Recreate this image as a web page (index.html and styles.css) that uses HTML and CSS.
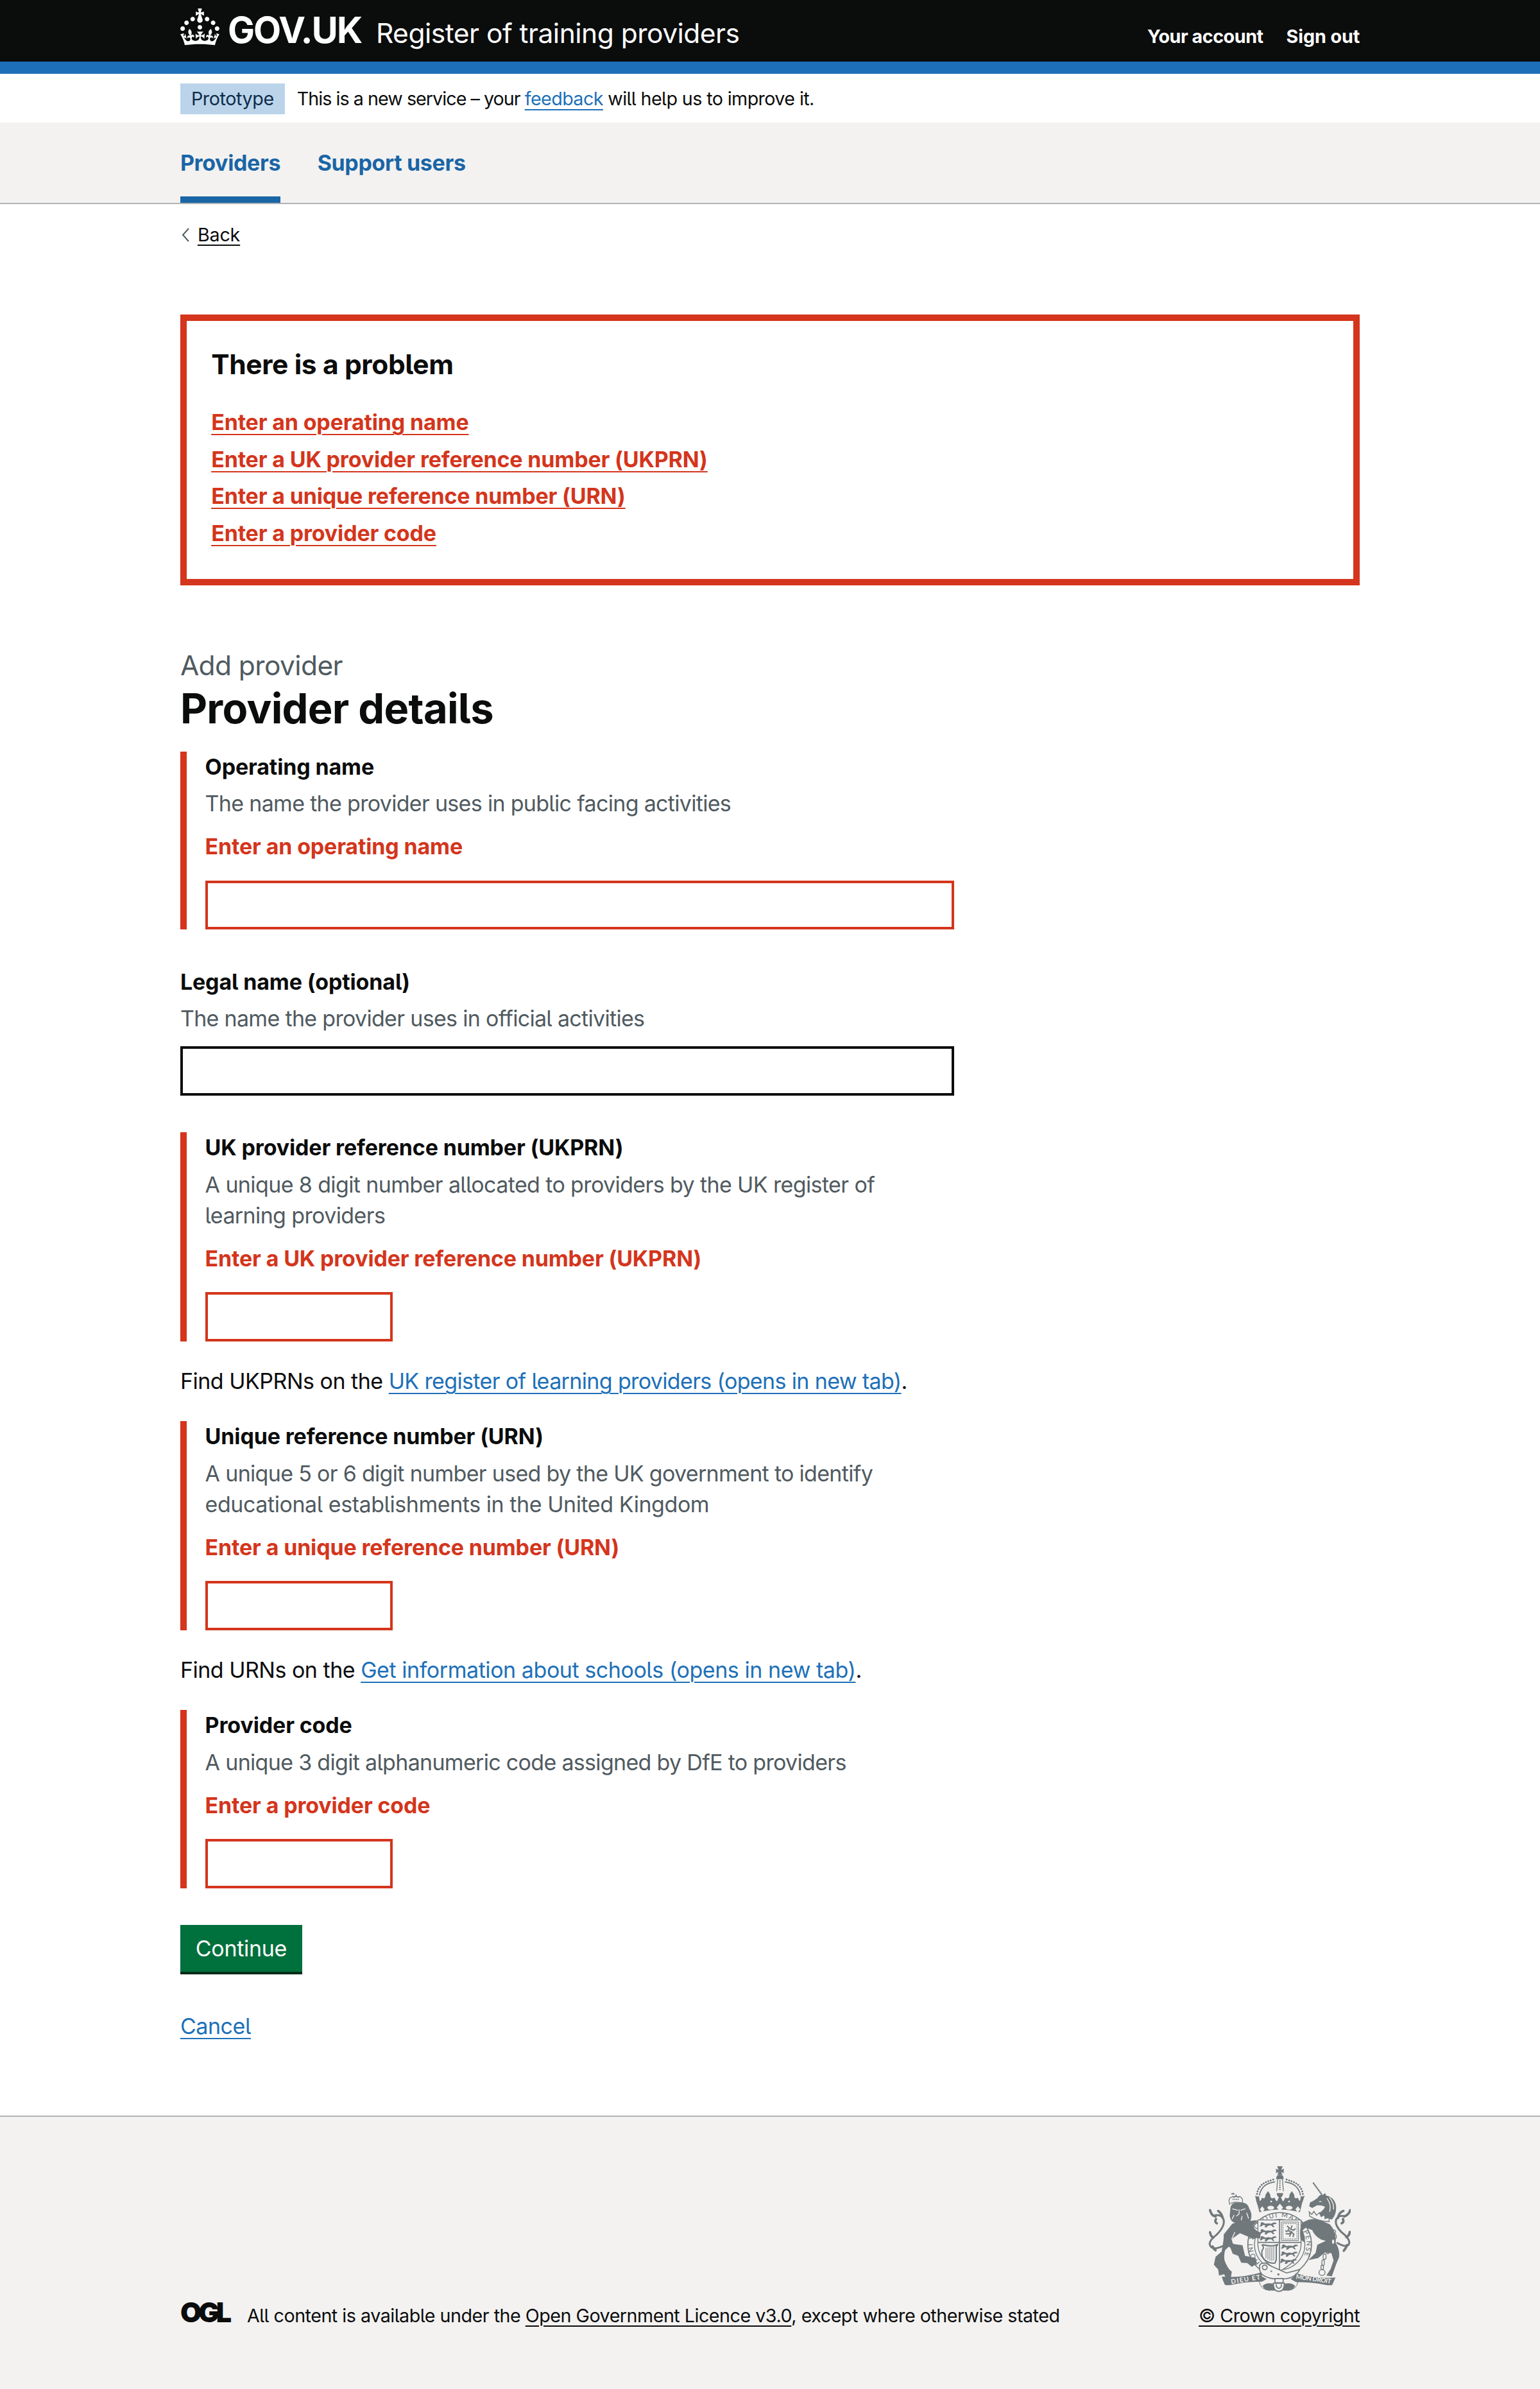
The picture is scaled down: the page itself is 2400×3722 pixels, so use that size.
FILE: index.html
```
<!DOCTYPE html>
<html lang="en">
<head>
  <meta charset="utf-8">
  <title>Error: Provider details - Register of training providers</title>
  <link rel="stylesheet" href="styles.css">
</head>
<body>
  <header class="header">
    <div class="container header-inner">
      <a class="brand" href="#">
        <svg class="crown" viewBox="0 0 32 30" fill="currentColor" aria-hidden="true"><path d="M22.6 10.4c-1 .4-2-.1-2.4-1-.4-.9.1-2 1-2.4.9-.4 2 .1 2.4 1s-.1 2-1 2.4m-5.9 6.7c-.9.4-2-.1-2.4-1-.4-.9.1-2 1-2.4.9-.4 2 .1 2.4 1s-.1 2-1 2.4m10.8-3.7c-1 .4-2-.1-2.4-1-.4-.9.1-2 1-2.4.9-.4 2 .1 2.4 1s0 2-1 2.4m3.3 4.8c-1 .4-2-.1-2.4-1-.4-.9.1-2 1-2.4.9-.4 2 .1 2.4 1s-.1 2-1 2.4M17 4.7l2.3 1.2V2.5l-2.3.7-.2-.2.9-3h-3.4l.9 3-.2.2c-.1.1-2.3-.7-2.3-.7v3.4L15 4.7c.1.1.1.2.2.2l-1.3 4c-.1.2-.1.4-.1.6 0 1.1.8 2 1.9 2.2h.7c1-.2 1.9-1.1 1.9-2.1 0-.2 0-.4-.1-.6l-1.3-4c-.1-.2 0-.2.1-.3m-7.6 5.7c.9.4 2-.1 2.4-1 .4-.9-.1-2-1-2.4-.9-.4-2 .1-2.4 1s0 2 1 2.4m-5 3c.9.4 2-.1 2.4-1 .4-.9-.1-2-1-2.4-.9-.4-2 .1-2.4 1s.1 2 1 2.4m-3.2 4.8c.9.4 2-.1 2.4-1 .4-.9-.1-2-1-2.4-.9-.4-2 .1-2.4 1s0 2 1 2.4m14.8 11c4.4 0 8.6.3 12.3.8 1.1-4.5 2.4-7 3.7-8.8l-2.5-.9c.2 1.3.3 1.9 0 2.7-.4-.4-.8-1.1-1.1-2.3l-1.2 4c.7-.5 1.3-.8 2-.9-1.1 2.5-2.6 3.1-3.5 3-1.1-.2-1.7-1.2-1.5-2.1.3-1.2 1.5-1.5 2.1-.1 1.1-2.3-.8-3-2-2.3 1.9-1.9 2.1-3.5.6-5.6-2.1 1.6-2.1 3.2-1.2 5.5-1.2-1.4-3.2-.6-2.5 1.6.9-1.4 2.1-.5 1.9.8-.2 1.1-1.7 2.1-3.5 1.9-2.7-.2-2.9-2.1-2.9-3.6.7-.1 1.9.5 2.9 1.9l.4-4.3c-1.1 1.1-2.1 1.4-3.2 1.4.4-1.2 2.1-3 2.1-3h-5.4s1.7 1.9 2.1 3c-1.1 0-2.1-.2-3.2-1.4l.4 4.3c1-1.4 2.2-2 2.9-1.9-.1 1.5-.2 3.4-2.9 3.6-1.9.2-3.4-.8-3.5-1.9-.2-1.3 1-2.2 1.9-.8.7-2.3-1.2-3-2.5-1.6.9-2.2.9-3.9-1.2-5.5-1.5 2-1.3 3.7.6 5.6-1.2-.7-3.1 0-2 2.3.6-1.4 1.8-1.1 2.1.1.2.9-.3 1.9-1.5 2.1-.9.2-2.4-.5-3.5-3 .6 0 1.2.3 2 .9l-1.2-4c-.3 1.1-.7 1.9-1.1 2.3-.3-.8-.2-1.4 0-2.7l-2.9.9C1.3 23 2.6 25.5 3.7 30c3.7-.5 7.9-.8 12.3-.8"/></svg>
        <span class="brand-name">GOV.UK</span>
        <span class="brand-service">Register of training providers</span>
      </a>
      <nav class="account">
        <a class="account-link" href="#">Your account</a>
        <a class="account-link account-link--out" href="#">Sign out</a>
      </nav>
    </div>
  </header>

  <div class="container phase">
    <strong class="tag">Prototype</strong>
    <span><span class="phase-lead">This is a new service – your </span><a class="link" href="#">feedback</a> will help us to improve it.</span>
  </div>

  <nav class="nav">
    <div class="container nav-inner">
      <a class="nav-link nav-link--current" href="#">Providers</a>
      <a class="nav-link" href="#">Support users</a>
    </div>
  </nav>

  <div class="container">
    <a class="back" href="#">
      <svg class="back-arrow" viewBox="0 0 12 22" aria-hidden="true"><path d="M11 1 2 11l9 10" fill="none" stroke="#505a5f" stroke-width="2"/></svg>
      <span class="back-text">Back</span>
    </a>

    <main class="main">
      <section class="summary">
        <h2 class="summary-title">There is a problem</h2>
        <ul class="summary-list">
          <li><a href="#operating-name">Enter an operating name</a></li>
          <li><a href="#ukprn">Enter a UK provider reference number (UKPRN)</a></li>
          <li><a href="#urn">Enter a unique reference number (URN)</a></li>
          <li><a href="#code">Enter a provider code</a></li>
        </ul>
      </section>

      <form class="form">
        <h1 class="title"><span class="caption">Add provider</span>Provider details</h1>

        <div class="group group--error">
          <label class="label" for="operating-name">Operating name</label>
          <div class="hint">The name the provider uses in public facing activities</div>
          <p class="error">Enter an operating name</p>
          <input class="input input--error" id="operating-name" type="text">
        </div>

        <div class="group">
          <label class="label" for="legal-name">Legal name (optional)</label>
          <div class="hint">The name the provider uses in official activities</div>
          <input class="input" id="legal-name" type="text">
        </div>

        <div class="group group--error group--tight">
          <label class="label" for="ukprn">UK provider reference number (UKPRN)</label>
          <div class="hint hint--loose">A unique 8 digit number allocated to providers by the UK register of<br>learning providers</div>
          <p class="error">Enter a UK provider reference number (UKPRN)</p>
          <input class="input input--error input--short" id="ukprn" type="text">
        </div>

        <p class="para">Find UKPRNs on the <a class="link link--snug" href="#">UK register of learning providers (opens in new tab)</a>.</p>

        <div class="group group--error group--tight">
          <label class="label" for="urn">Unique reference number (URN)</label>
          <div class="hint">A unique 5 or 6 digit number used by the UK government to identify<br><span class="wide">educational establishments in the United Kingdom</span></div>
          <p class="error">Enter a unique reference number (URN)</p>
          <input class="input input--error input--short" id="urn" type="text">
        </div>

        <p class="para">Find URNs on the <a class="link wide" href="#">Get information about schools (opens in new tab)</a>.</p>

        <div class="group group--error">
          <label class="label" for="code">Provider code</label>
          <div class="hint">A unique 3 digit alphanumeric code assigned by DfE to providers</div>
          <p class="error">Enter a provider code</p>
          <input class="input input--error input--short" id="code" type="text">
        </div>

        <button class="button" type="button">Continue</button>
        <p class="para para--cancel"><a class="link wide" href="#">Cancel</a></p>
      </form>
    </main>
  </div>

  <footer class="footer">
    <div class="container footer-inner">
      <div class="licence">
        <span class="ogl">OGL</span>
        <span>All content is available under the <a class="link link--dark" href="#">Open Government Licence v3.0</a>, except where otherwise stated</span>
      </div>
      <div class="copyright">
        <svg class="arms" viewBox="132 68 666 590" aria-hidden="true">
          <defs>
            <path id="garter" d="M374 522A126 126 0 1 1 560 518"/>
            <g id="passant">
              <path d="M2 8q8-9 16 0l8 3q14-4 26 0l12-6q12-2 14 6l-9 1-9 4 8 10-7 1-9-9-14 2-8 8-9-1 5-9-12-1-9 7-7-2 6-9z" fill="#70787b" stroke="none"/>
            </g>
          </defs>
          <g fill="#70787b" stroke="none">
            <!-- imperial crown -->
            <path d="M461 88 454 71h26l-7 17 12-6v21l-12-6 6 13h-24l6-13-12 6V82z"/>
            <path d="M450 132q-2-22 17-22t17 22z"/>
            <path d="M351 208q10 6 18 3l4 24q9-6 9-16l12 2q7-10 5-16 8-12 12-18 9 10 12 20-3 8 6 14l14-3q2 12 10 18l9-20q-9-5-10-20h30q-1 15-10 20l9 20q8-6 10-18l14 3q9-6 6-14 3-10 12-20 7 9 12 20-3 8 5 14l12-2q2 10 9 16l4-24q8 2 18-3l-13 38-7 30q-2 8-4 10-90-24-188 0-4-22-14-50z"/>
          </g>
          <g fill="#f3f2f1" stroke="none">
            <path d="m384 258 11 14-10 15-12-14zM467 246l15 18-15 18-15-18zM551 258l11 15-12 14-10-15z"/>
            <ellipse cx="424" cy="265" rx="16" ry="9"/><ellipse cx="510" cy="265" rx="16" ry="9"/>
            <circle cx="426" cy="236" r="4"/><circle cx="510" cy="236" r="4"/>
          </g>
          <g fill="none" stroke="#70787b" stroke-linecap="round">
            <path d="M360 200q6-52 82-68M574 200q-6-52-82-68" stroke-width="9" stroke-dasharray="0 12"/>
            <path d="M371 206q10-54 72-62M563 206q-10-54-72-62" stroke-width="5"/>
            <path d="M456 134l-4 52M479 134l4 52" stroke-width="4"/>
            <path d="M467 140v46" stroke-width="7" stroke-dasharray="0 10"/>
          </g>
          <!-- garter -->
          <g fill="none" stroke="#70787b">
            <circle cx="466" cy="437" r="149" stroke-width="5"/>
            <circle cx="466" cy="437" r="118" stroke-width="4"/>
          </g>
          <text class="garter-text" fill="#70787b"><textPath href="#garter" textLength="545">HONI SOIT QUI MAL Y PENSE</textPath></text>
          <!-- shield -->
          <path d="M364 322h202v116q-2 72-101 124-99-52-101-124z" fill="#f3f2f1" stroke="#70787b" stroke-width="4"/>
          <path d="M465 322v238M364 427h202" stroke="#70787b" stroke-width="5"/>
          <g>
            <use href="#passant" x="374" y="329"/><use href="#passant" x="374" y="362"/><use href="#passant" x="374" y="394"/>
            <use href="#passant" x="474" y="433"/><use href="#passant" x="472" y="466"/><use href="#passant" x="468" y="500"/>
          </g>
          <g fill="none" stroke="#70787b">
            <path d="M474 332h80v86h-80z" stroke-width="3"/>
            <path d="M481 339h66v72h-66z" stroke-width="3" stroke-dasharray="8 3"/>
            <path d="M500 350l12 10-8 12 18 6-14 10-14-2M524 348l-6 18 14 4 8-8M512 400l8-20 12 8-4 14M492 372l10 6" stroke-width="6"/>
            <path d="M384 440q12 10 0 24-8 28 14 46 18 16 46 14l6-16V446l8-10q-26 14-70 2z" stroke-width="6"/>
            <path d="M402 452v50M411 450v58M420 448v64M429 448v66M438 446v66" stroke-width="3"/>
          </g>
          <!-- supporters -->
          <g fill="#70787b" stroke="none">
            <path d="M236 262q4-24 42-22 38-4 46 30 14 22 8 46-2 18-16 28l-22-10-8 12-24-8q-28-8-30-36 2-22 4-40z"/>
            <path d="M244 340q28-12 64-4 22-14 54-12l-22 26q16 28 38 30l-4 30q-18-8-30 2l-30-14-34-14-34 24q-8 28 12 28l34 4q6 26 12 50l50 10 4 26-22 16-22-18-28-2-14-32-26-10-10-26-8-8-18 18q-6 28-2 48 16 42 34 52l-4 26-24 4-8-18-24 6-4-28-20-22 8-38 28-24q12-60 10-80z"/>
            <path d="M608 240q24-10 38-24 6-14 24-12l8-8 6 12q40 8 46 50 2 40-20 62l-58-14-4-14q26-18 30-32-20-8-38-6l-22 12-14-8z"/>
            <path d="M572 336q34-24 74-16l54 22q32 34 28 88 20 30 16 66l-14 34-20 56-26-4 20-30 14-40-10-34-30-4-32 26-46 10 34-34 8-38 40-18-22-6q-30-16-42-44l-30-12-14 12 10 34-4 22-16-12q-8-50 8-78z"/>
          </g>
          <g fill="none" stroke="#f3f2f1" stroke-linecap="round">
            <path d="M246 270l22 6M284 276l20-6M276 274v20l-12 10M290 306l-4 16M252 300l-8 16M312 290l8 24M256 380l-14 30 8 20" stroke-width="4"/>
            <path d="M652 236h8M688 222q20 26 12 60M700 218q20 22 18 54" stroke-width="4"/>
          </g>
          <g fill="none" stroke="#70787b" stroke-linecap="round">
            <path d="M200 444q-54 26-62-10 2-20 32-42 40-40 34-70-8-26-40-22" stroke-width="9"/>
            <path d="M140 276q6 26 26 30M178 280q16 10 22 34M168 318q-8 14 4 20M140 380q4 22 16 24M152 446q4 12 14 18" stroke-width="11"/>
            <path d="M736 430q52 30 56-4-4-22-34-44-36-34-28-62 10-22 40-16" stroke-width="9"/>
            <path d="M796 276q-6 22-28 30M764 280q-20 6-26 34M762 318q6 14-6 20M794 378q-2 18-16 24M780 440q-2 12-14 26" stroke-width="11"/>
            <path d="M624 150l38 52" stroke-width="7" stroke-dasharray="3 7"/>
            <path d="M232 250q-8-28 6-34l20-4 22 2q18 6 10 32M236 244q28-10 54 0M246 212q10 10 16-6 6 16 18 6M248 202v-6M240 200h14" stroke-width="4"/>
            <path d="M248 226h30" stroke-width="6" stroke-dasharray="0 8"/>
          </g>
          <path d="M604 284l12 12 10-14 12 18 14-12 8 18 16-8 2 18 18-6 2 20q-50 0-92-26z" fill="#f3f2f1" stroke="#70787b" stroke-width="4"/>
          <g fill="none" stroke="#70787b" stroke-width="4">
            <ellipse cx="714" cy="378" rx="14" ry="10"/><ellipse cx="724" cy="400" rx="7" ry="12"/><ellipse cx="716" cy="424" rx="7" ry="12" fill="#f3f2f1"/><ellipse cx="706" cy="446" rx="7" ry="12"/><ellipse cx="690" cy="468" rx="8" ry="12"/><ellipse cx="676" cy="494" rx="7" ry="13"/><ellipse cx="669" cy="522" rx="6" ry="14"/><circle cx="664" cy="568" r="14"/><ellipse cx="665" cy="544" rx="6" ry="11"/>
          </g>
          <!-- belt and motto -->
          <path d="M372 540q-2-18 28-16l30 16 68 30 62-16q-20 40-74 44-70 6-104-22-12-14-10-36z" fill="#f3f2f1" stroke="#70787b" stroke-width="5"/>
          <circle cx="396" cy="544" r="11" fill="none" stroke="#70787b" stroke-width="5"/>
          <circle cx="427" cy="562" r="4" fill="#70787b"/><circle cx="460" cy="577" r="5" fill="#70787b"/>
          <path d="M195 587q90 8 186-20l2 20 22 12-22 12q-80 0-150 16h-22q-10-16-16-40zM727 591q-90 8-186-20l-8 16-16 12 26 14q80 0 146 14h22q8-16 16-36z" fill="#70787b"/>
          <path d="M386 630q20-18 52-8l6 30q-50 4-58-22zM538 630q-20-18-52-8l-6 30q50 4 58-22z" fill="#70787b"/>
          <path d="M370 610q8 40 50 42M552 610q-8 40-50 42" fill="none" stroke="#70787b" stroke-width="3"/>
          <path d="M444 596h38v20h-38zM436 618h52q0 38-26 38t-26-38zM450 622v10q12 20 24 0v-10" fill="#f3f2f1" stroke="#70787b" stroke-width="5"/>
          <text class="motto" transform="translate(240 621) rotate(-9)" textLength="138">DIEU ET</text>
          <text class="motto" transform="translate(541 597) rotate(8)" textLength="166">MON DROIT</text>
        </svg>
        <a class="link link--dark" href="#">© Crown copyright</a>
      </div>
    </div>
  </footer>
</body>
</html>
```
FILE: styles.css
```
/* 1rem is ten design pixels */
html {
  font-size: 19.148px;
}

* {
  box-sizing: border-box;
}

body {
  margin: 0;
  background: #fff;
  color: #0b0c0c;
  font-family: Inter, "Noto Sans", sans-serif;
  font-size: 34px;
  font-feature-settings: "cv05";
  line-height: 2.5rem;
  white-space: nowrap;
}

h1, h2, p, ul {
  margin: 0;
  padding: 0;
}

.container {
  width: 96rem;
  margin: 0 auto;
}

.link {
  color: #1d70b8;
  text-decoration: underline 2px;
  text-underline-offset: 6px;
}

.link--dark {
  color: #0b0c0c;
  text-underline-offset: 5px;
}

.link--snug {
  letter-spacing: -0.64px;
}

.wide {
  letter-spacing: -0.44px;
}

/* Header */
.header {
  height: 115px;
  background: #0b0c0c;
  border-bottom: 19px solid #1d70b8;
}

.header-inner {
  display: flex;
  justify-content: space-between;
  align-items: baseline;
  padding-top: 13px;
}

.brand {
  display: flex;
  align-items: baseline;
  color: #fff;
  text-decoration: none;
}

.crown {
  width: 61px;
  height: 57.5px;
  margin-right: 13px;
  align-self: flex-start;
}

.brand-name {
  width: 231px;
  font-size: 56px;
  font-weight: 700;
  letter-spacing: -1.8px;
  line-height: 69px;
}

.brand-service {
  font-size: 42.5px;
  letter-spacing: -0.5px;
}

.account {
  display: flex;
  gap: 36px;
}

.account-link {
  color: #fff;
  font-size: 28.7px;
  font-weight: 700;
  letter-spacing: -0.45px;
  text-decoration: none;
}

.account-link--out {
  letter-spacing: -0.1px;
}

/* Phase banner */
.phase {
  display: flex;
  align-items: center;
  gap: 19px;
  height: 76px;
  padding-top: 1px;
  font-size: 28.7px;
  letter-spacing: -0.6px;
}

.phase-lead {
  letter-spacing: -0.97px;
}

.tag {
  height: 48px;
  padding: 0 17px 0 17px;
  background: #bbd4ea;
  color: #0c2d4a;
  font-weight: 400;
  letter-spacing: -0.4px;
  line-height: 48px;
}

/* Service navigation */
.nav {
  background: #f3f2f1;
  border-bottom: 2px solid #b1b4b6;
}

.nav-inner {
  display: flex;
  gap: 3rem;
}

.nav-link {
  height: 125px;
  padding-top: 39px;
  color: #1a65a6;
  font-weight: 700;
  letter-spacing: -0.35px;
  text-decoration: none;
}

.nav-link--current {
  border-bottom: 10px solid #1a65a6;
}

.back {
  display: flex;
  align-items: center;
  gap: 13px;
  margin-top: 1.5rem;
  padding-left: 2px;
  color: #0b0c0c;
  font-size: 28.7px;
  letter-spacing: -0.19px;
  line-height: 2rem;
  text-decoration: none;
}

.back-arrow {
  width: 12px;
  height: 22px;
}

.back-text {
  text-decoration: underline 2px;
  text-underline-offset: 5px;
}

.main {
  padding: 5.5rem 0 4rem;
}

/* Error summary */
.summary {
  margin-bottom: 5rem;
  padding: 2rem;
  border: 10px solid #d4351c;
}

.summary-title {
  margin-bottom: 2rem;
  font-size: 42.5px;
  letter-spacing: -0.38px;
  line-height: 3rem;
}

.summary-list {
  list-style: none;
}

.summary-list li {
  margin-bottom: 0.5rem;
}

.summary-list a {
  color: #d4351c;
  font-weight: 700;
  letter-spacing: -0.17px;
  text-decoration: underline 2px;
  text-underline-offset: 6px;
}

/* Form */
.form {
  width: 63rem;
}

.title {
  margin-bottom: 1.5rem;
  font-size: 65px;
  letter-spacing: -0.72px;
  line-height: 4rem;
}

.caption {
  display: block;
  color: #505a5f;
  font-size: 42.5px;
  font-weight: 400;
  letter-spacing: -0.6px;
  line-height: 3rem;
}

.group {
  margin-bottom: 3rem;
}

.group--error {
  padding-left: 1.5rem;
  border-left: 10px solid #d4351c;
}

.group--tight {
  margin-bottom: 2rem;
}

.label {
  display: block;
  margin-bottom: 0.5rem;
  font-weight: 700;
  letter-spacing: -0.15px;
}

.hint {
  margin-bottom: 1rem;
  color: #505a5f;
  letter-spacing: -0.69px;
}

.hint--loose {
  letter-spacing: -0.62px;
}

.error {
  margin-bottom: 1.5rem;
  color: #d4351c;
  font-weight: 700;
  letter-spacing: -0.17px;
}

.input {
  display: block;
  width: 100%;
  height: 4rem;
  padding: 0.5rem;
  border: 4px solid #0b0c0c;
  border-radius: 0;
  background: #fff;
  font: inherit;
}

.input--error {
  border-color: #d4351c;
}

.input--short {
  width: 292px;
}

.para {
  margin-bottom: 2rem;
  letter-spacing: -0.5px;
}

.button {
  display: block;
  width: 190px;
  height: 3.8rem;
  margin-bottom: 3.2rem;
  padding: 0;
  border: 0;
  background: #00703c;
  box-shadow: 0 4px 0 #002d18;
  color: #fff;
  font: inherit;
  letter-spacing: -0.33px;
}

/* Footer */
.footer {
  height: 427px;
  padding-top: 76px;
  background: #f3f2f1;
  border-top: 2px solid #b1b4b6;
  font-size: 28.7px;
  letter-spacing: -0.5px;
  line-height: 2rem;
}

.footer-inner {
  display: flex;
  justify-content: space-between;
  align-items: flex-end;
}

.licence {
  display: flex;
  align-items: baseline;
}

.ogl {
  width: 104px;
  font-size: 43px;
  font-weight: 900;
  letter-spacing: -5px;
}

.copyright {
  display: flex;
  flex-direction: column;
  align-items: center;
  gap: 18px;
}

.arms {
  width: 222px;
  height: 196.5px;
}

.garter-text {
  font: 500 32px Lato, sans-serif;
}

.motto {
  fill: #f3f2f1;
  font: 700 30px Lato, sans-serif;
  letter-spacing: 0;
}
```
